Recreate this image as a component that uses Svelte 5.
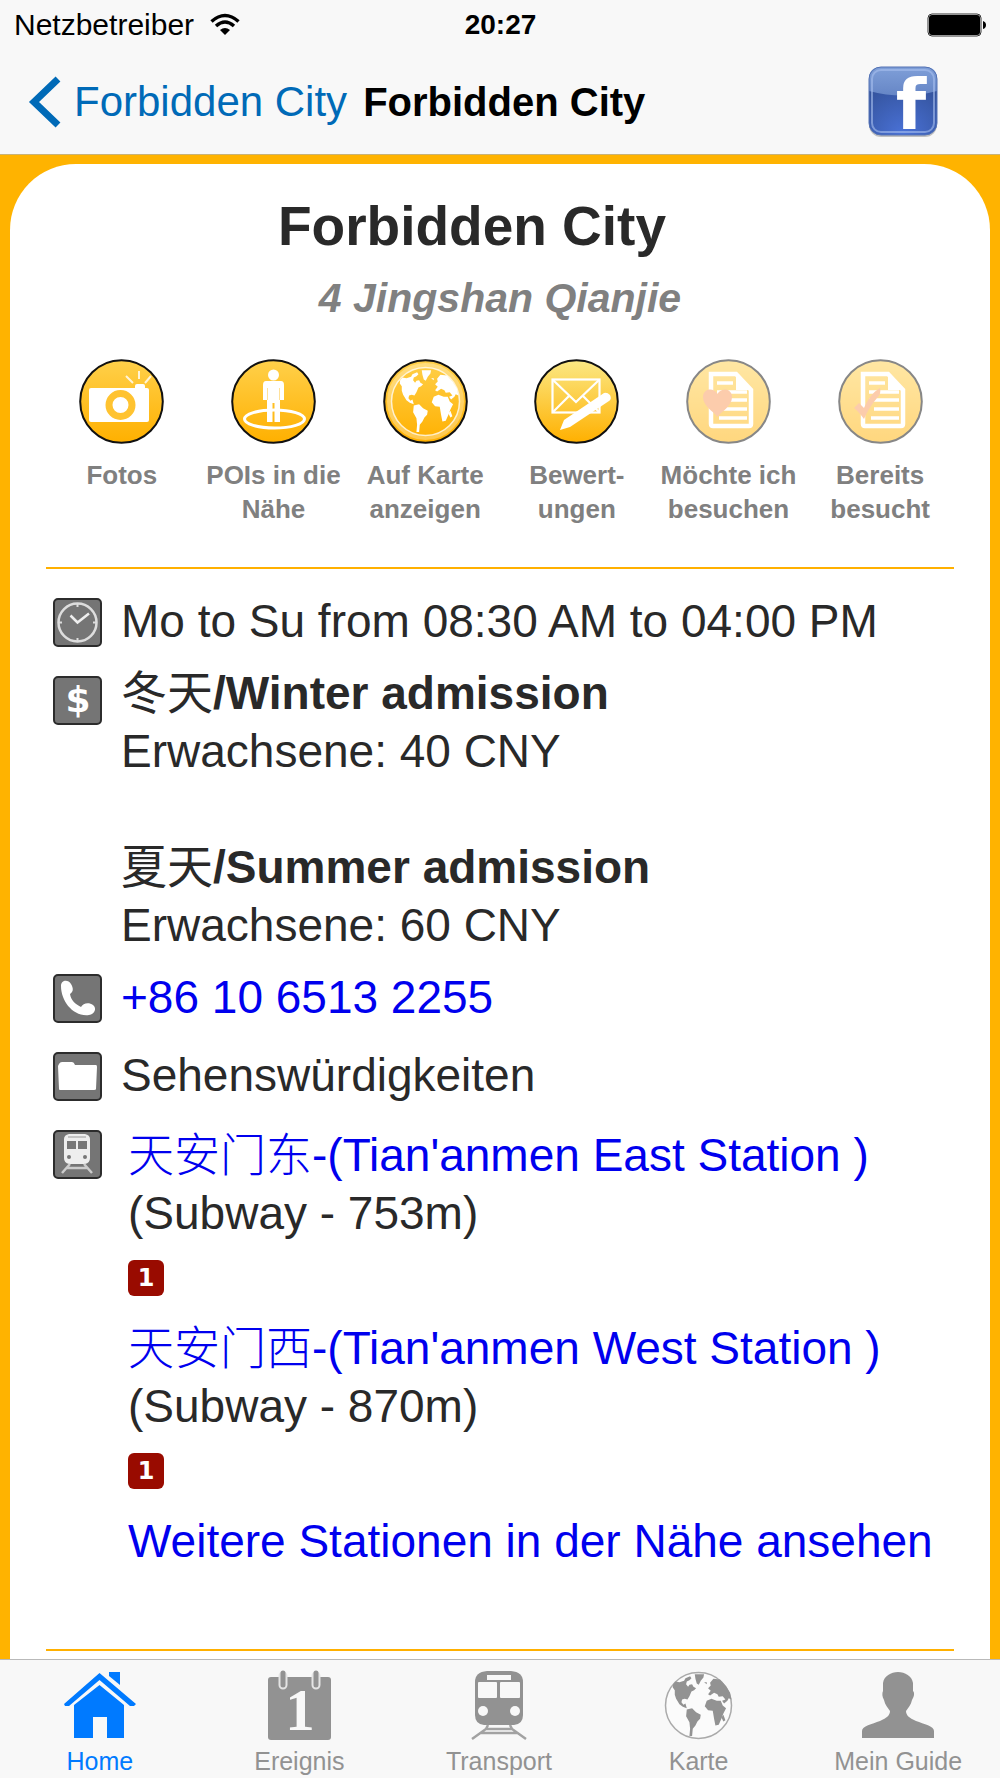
<script>
  let place = {
    name: 'Forbidden City',
    address: '4 Jingshan Qianjie',
    hours: 'Mo to Su from 08:30 AM to 04:00 PM',
    phone: '+86 10 6513 2255',
    category: 'Sehenswürdigkeiten'
  };

  let actions = [
    { icon: 'camera', lines: ['Fotos'] },
    { icon: 'person', lines: ['POIs in die', 'Nähe'] },
    { icon: 'globe', lines: ['Auf Karte', 'anzeigen'] },
    { icon: 'mail', lines: ['Bewert-', 'ungen'], pale: true },
    { icon: 'wish', lines: ['Möchte ich', 'besuchen'], off: true },
    { icon: 'visited', lines: ['Bereits', 'besucht'], off: true }
  ];

  let stations = [
    { cn: '天安门东', en: "Tian'anmen East Station", distance: '753m', line: '1' },
    { cn: '天安门西', en: "Tian'anmen West Station", distance: '870m', line: '1' }
  ];

  let tabs = [
    { id: 'home', label: 'Home' },
    { id: 'event', label: 'Ereignis' },
    { id: 'transport', label: 'Transport' },
    { id: 'map', label: 'Karte' },
    { id: 'guide', label: 'Mein Guide' }
  ];

  let activeTab = $state('home');
</script>

{#snippet continents()}
  <path d="M55 72 L62 64 L74 66 L88 62 L92 54 L106 48 L110 54 L104 60 L96 64 L94 72 L100 80 L104 74 L112 72 L116 80 L124 84 L118 90 L110 94 L104 108 L98 118 L90 116 L82 118 L80 126 L86 134 L92 130 L96 144 L84 140 L74 132 L64 116 L60 104 L60 90 L54 82 Z" />
  <path d="M96 148 L112 144 L124 156 L138 164 L136 176 L128 184 L122 196 L114 206 L112 228 L104 228 L106 206 L104 186 L94 168 Z" />
  <path d="M120 42 L148 42 L146 52 L138 62 L132 74 L126 70 L122 56 Z" />
  <path d="M160 84 L168 76 L166 68 L176 56 L196 58 L214 78 L226 98 L230 118 L222 114 L218 122 L208 130 L202 122 L212 118 L204 108 L192 110 L188 102 L178 98 L166 106 L160 102 L168 92 Z" />
  <path d="M156 122 L170 116 L186 122 L198 122 L204 136 L214 144 L206 160 L200 176 L192 194 L182 196 L178 176 L174 152 L160 150 L150 138 Z" />
  <path d="M200 172 L206 164 L212 180 L206 184 Z M148 66 L156 66 L156 72 Z" />
{/snippet}

{#snippet sheet()}
  <path d="M25 15 H50 L65 31 V65 Q65 67 63 67 H27 Q25 67 25 65 Z" fill="none" stroke="#fff" stroke-width="4.5" />
  <path d="M50 14 L67 31 H50 Z" fill="#fff" />
  <path d="M31 24 H47 M31 33 H61 M31 41 H61 M36 50 H61 M33 59 H61" stroke="#fff" stroke-width="3.5" />
{/snippet}

{#snippet actionIcon(name, pale)}
  <svg class="round" viewBox="0 0 85 85" aria-hidden="true">
    <defs>
      <linearGradient id="fill-{name}" x1="0" y1="0" x2="0" y2="1">
        <stop offset="0" stop-color={pale ? '#fbe884' : '#ffd04a'} />
        <stop offset="1" stop-color="#ffb000" />
      </linearGradient>
    </defs>
    <circle cx="42.5" cy="42.5" r="41.3" fill="url(#fill-{name})" stroke="#111" stroke-width="2" />
    {#if name === 'camera'}
      <rect x="10" y="29" width="60" height="34" rx="2" fill="#fff" />
      <rect x="56" y="25" width="10" height="6" rx="2" fill="#fff" />
      <circle cx="41.5" cy="46" r="11.5" fill="#fff" stroke="#ffc330" stroke-width="7" />
      <path d="M47 17 L54 24 M60 12 V20 M72 17 L66 24" stroke="#fff" stroke-width="2" opacity="0.8" />
    {:else if name === 'person'}
      <ellipse cx="43.5" cy="60" rx="30" ry="9" fill="none" stroke="#fff" stroke-width="3" />
      <circle cx="42.5" cy="16" r="5.5" fill="#fff" />
      <path d="M35 22 H50 Q53 22 53 26 V41 H49 V63 H43.5 V44 H41.5 V63 H36 V41 H32 V26 Q32 22 35 22 Z" fill="#fff" />
      <path d="M36.5 29 V41 M48.5 29 V41" stroke="#ffe19a" stroke-width="1" />
    {:else if name === 'globe'}
      <circle cx="42.5" cy="42.5" r="36" fill="none" stroke="#fff" stroke-width="5" opacity="0.3" />
      <circle cx="42.5" cy="42.5" r="34" fill="none" stroke="#fff" stroke-width="1.5" opacity="0.7" />
      <g transform="translate(-1.2 -2.8) scale(0.333)" fill="#fff">{@render continents()}</g>
    {:else if name === 'mail'}
      <g fill="none" stroke="#fff" stroke-width="2.2">
        <rect x="18.5" y="20.5" width="47" height="33" />
        <path d="M19 21 L42 43 L65 21 M19 53 L35 37 M65 53 L49 37" />
      </g>
      <path d="M26 71 L30 61 L70 34 Q73 33 76 36 Q78 40 75 42 L36 68 Z" fill="#fff" />
    {:else if name === 'wish'}
      {@render sheet()}
      <path d="M31.5 58 C27 52 17 47 17 38 C17 29 28 28 31.5 35 C35 28 46 29 46 38 C46 47 36 52 31.5 58 Z" fill="#fb9a5c" />
    {:else}
      {@render sheet()}
      <path d="M16 49 L21 44 L26 49 C30 40 35 33 42 29 C43 33 42 36 39 39 C33 46 29 53 26 60 C23 56 20 52 16 49 Z" fill="#fb9a5c" />
    {/if}
  </svg>
{/snippet}

{#snippet rowIcon(name)}
  <svg class="square" viewBox="0 0 49 49" aria-hidden="true">
    <rect x="1" y="1" width="47" height="47" rx="4" fill="#757575" stroke="#2c2c2c" stroke-width="2" />
    {#if name === 'clock'}
      <circle cx="24.5" cy="24.5" r="19" fill="none" stroke="#ddd" stroke-width="2.5" />
      <path d="M17.5 17.5 L24.5 24.5 L36 15.5" fill="none" stroke="#eee" stroke-width="2.5" />
      <path d="M24.5 6 V9 M24.5 40 V43 M6 24.5 H9 M40 24.5 H43" stroke="#ddd" stroke-width="2" />
    {:else if name === 'price'}
      <text class="dollar" x="25" y="36" text-anchor="middle">$</text>
    {:else if name === 'phone'}
      <path d="M8 12 C8 6 15 5 18 10 C21 15 20 18 17 20 C18 26 22 30 28 33 C30 29 36 28 40 31 C44 34 42 40 36 41 C20 43 8 27 8 12 Z" fill="#fff" />
    {:else if name === 'folder'}
      <path d="M6 12 Q7 10 9 10 H19 Q21 10 22 13 H43 Q44 13 44 15 L43 37 Q43 38 41 38 H7 Q6 38 6 37 L5 14 Z" fill="#fff" />
    {:else}
      <path d="M16 4 H32 Q37 5 37 9 V28 Q37 33 32 34 H16 Q11 33 11 28 V9 Q11 5 16 4 Z" fill="#eee" />
      <path d="M14 11 H23 V19 H14 Z M25 11 H34 V19 H25 Z" fill="#777" />
      <path d="M15 7 H33" stroke="#999" stroke-width="1" />
      <circle cx="16" cy="27" r="2" fill="#777" />
      <circle cx="32" cy="27" r="2" fill="#777" />
      <path d="M17 34 L9 43 M31 34 L39 43 M13 38 H35" stroke="#ccc" stroke-width="2.5" />
    {/if}
  </svg>
{/snippet}

{#snippet tabIcon(name)}
  {#if name === 'home'}
    <svg class="tab-icon" viewBox="0 0 72 69" aria-hidden="true" fill="currentColor">
      <path d="M0 33 L35.5 2 L72 33 L70 35 L66 35 L35.5 9 L5 35 L1 35 Z" />
      <path d="M45 1 H56 V14 L45 5 Z" />
      <path d="M35.5 14 L60 34 V67 H43 V46 H29 V67 H10 V34 Z" />
    </svg>
  {:else if name === 'event'}
    <svg class="tab-icon" viewBox="0 0 72 69" aria-hidden="true">
      <rect x="5" y="6" width="63" height="63" rx="3" fill="#929292" />
      <path d="M20 5 V14 M53 5 V14" stroke="#e4e4e4" stroke-width="9" stroke-linecap="round" />
      <path d="M20 2 V14 M53 2 V14" stroke="#929292" stroke-width="5" stroke-linecap="round" />
      <text class="day" x="37" y="59" text-anchor="middle">1</text>
    </svg>
  {:else if name === 'transport'}
    <svg class="tab-icon" viewBox="0 0 72 69" aria-hidden="true">
      <path d="M24 0 H48 Q60 1 60 11 V44 Q60 53 51 54 H21 Q12 53 12 44 V11 Q12 1 24 0 Z" fill="#929292" />
      <g fill="#f8f8f8">
        <rect x="24" y="4" width="24" height="5" />
        <rect x="15" y="11" width="19" height="16" rx="1" />
        <rect x="37" y="11" width="20" height="16" rx="1" />
        <circle cx="20" cy="40" r="5" />
        <circle cx="52" cy="40" r="5" />
      </g>
      <path d="M25 54 L23 58 L9 68 M47 54 L49 58 L63 68 M23 58 H49 M18 62 H54" fill="none" stroke="#a2a2a2" stroke-width="2.5" />
    </svg>
  {:else if name === 'map'}
    <svg class="tab-icon" viewBox="0 0 72 69" aria-hidden="true">
      <circle cx="35.5" cy="34.5" r="33" fill="#fbfbfb" stroke="#aaa" stroke-width="1.5" />
      <g transform="translate(-8.2 -10.8) scale(0.333)" fill="#929292">{@render continents()}</g>
    </svg>
  {:else}
    <svg class="tab-icon" viewBox="0 0 72 69" aria-hidden="true">
      <path d="M36 1 C43 1 50 5 51 12 L51 20 C53 22 52 26 50 29 C49 34 46 37 44 40 C44 44 47 47 54 50 C62 53 72 55 72 60 V67 H0 V60 C0 55 10 53 18 50 C25 47 28 44 28 40 C26 37 23 34 22 29 C20 26 20 22 21 20 L21 12 C22 5 29 1 36 1 Z" fill="#929292" />
    </svg>
  {/if}
{/snippet}

<div class="screen">
  <header>
    <div class="status">
      <div class="carrier">
        <span>Netzbetreiber</span>
        <svg width="30" height="22" viewBox="0 0 30 22" aria-hidden="true">
          <path d="M1.5 7.5 Q15 -4.5 28.5 7.5" fill="none" stroke="#000" stroke-width="3.5" />
          <path d="M6 12 Q15 4 24 12" fill="none" stroke="#000" stroke-width="3.5" />
          <path d="M10 16 Q15 12 20 16 L15 21 Z" />
        </svg>
      </div>
      <span class="time">20:27</span>
      <svg class="battery" width="60" height="24" viewBox="0 0 60 24" aria-hidden="true">
        <rect x="1" y="1" width="53" height="22" rx="4" fill="#f8f8f8" stroke="#333" />
        <rect x="2" y="2" width="51" height="20" rx="3" />
        <path d="M56 8 Q59 9 59 12 Q59 15 56 16 Z" />
      </svg>
    </div>
    <div class="bar">
      <a class="back" href="#back">
        <svg width="32" height="52" viewBox="0 0 32 52" aria-hidden="true">
          <path d="M28 3 L4 26 L28 49" fill="none" stroke="currentColor" stroke-width="7" />
        </svg>
        Forbidden City
      </a>
      <span class="title">{place.name}</span>
      <button class="share" aria-label="Facebook">
        <svg width="70" height="72" viewBox="0 0 70 72" aria-hidden="true">
          <defs>
            <linearGradient id="gloss" x1="0" y1="0" x2="0" y2="1">
              <stop offset="0" stop-color="#7f9fd8" />
              <stop offset="1" stop-color="#6686c6" />
            </linearGradient>
            <radialGradient id="glow" cx="0.5" cy="1" r="0.8">
              <stop offset="0" stop-color="#4a72d8" />
              <stop offset="1" stop-color="#34539c" />
            </radialGradient>
          </defs>
          <rect x="1" y="2" width="68" height="69" rx="12" fill="#9a9a9a" opacity="0.6" />
          <rect x="1" y="1" width="68" height="68" rx="12" fill="url(#glow)" />
          <path d="M1 25 V13 Q1 1 13 1 H57 Q69 1 69 13 V25 Q35 34 1 25 Z" fill="url(#gloss)" />
          <rect x="1" y="1" width="68" height="68" rx="12" fill="none" stroke="#5573b4" />
          <rect x="4" y="4" width="62" height="62" rx="9" fill="none" stroke="#a9c0ee" stroke-width="2" opacity="0.6" />
          <text class="fb" x="43" y="63" text-anchor="middle">f</text>
        </svg>
      </button>
    </div>
  </header>

  <main>
    <article>
      <h1>{place.name}</h1>
      <p class="address">{place.address}</p>

      <div class="actions">
        {#each actions as action}
          <button class="action">
            <span class="action-icon" class:off={action.off}>{@render actionIcon(action.icon, action.pale)}</span>
            {#each action.lines as line}
              <span>{line}</span>
            {/each}
          </button>
        {/each}
      </div>

      <hr />

      <div class="info">
        <div class="row">
          {@render rowIcon('clock')}
          <div>{place.hours}</div>
        </div>
        <div class="row">
          {@render rowIcon('price')}
          <div class="prices">
            <div class="price">
              <b><span class="cn">冬天</span>/Winter admission</b>
              <span>Erwachsene: 40 CNY</span>
            </div>
            <div class="price">
              <b><span class="cn">夏天</span>/Summer admission</b>
              <span>Erwachsene: 60 CNY</span>
            </div>
          </div>
        </div>
        <div class="row">
          {@render rowIcon('phone')}
          <a href="tel:+861065132255">{place.phone}</a>
        </div>
        <div class="row">
          {@render rowIcon('folder')}
          <div>{place.category}</div>
        </div>
        <div class="row">
          {@render rowIcon('train')}
          <div class="stations">
            {#each stations as station}
              <div class="station">
                <a href="#station">{station.cn}-({station.en} )</a>
                <span>(Subway - {station.distance})</span>
                <span class="line">{station.line}</span>
              </div>
            {/each}
            <a href="#stations">Weitere Stationen in der Nähe ansehen</a>
          </div>
        </div>
      </div>

      <hr />
    </article>
  </main>

  <nav class="tabs">
    {#each tabs as tab}
      <a href="#{tab.id}" class:active={activeTab === tab.id} onclick={() => (activeTab = tab.id)}>
        {@render tabIcon(tab.id)}
        {tab.label}
      </a>
    {/each}
  </nav>
</div>

<style>
  :global(body) {
    margin: 0;
    background: #f8f8f8;
  }

  .screen {
    display: flex;
    flex-direction: column;
    min-height: 100vh;
    font-family: 'Liberation Sans', 'Noto Sans CJK SC', sans-serif;
    color: #292929;
  }

  a {
    color: #0000ee;
    text-decoration: none;
  }

  button {
    padding: 0;
    border: 0;
    background: none;
    font: inherit;
    cursor: pointer;
  }

  svg {
    display: block;
    flex: none;
    overflow: visible;
  }

  header {
    background: #f8f8f8;
    border-bottom: 1px solid #c9b377;
    color: #000;
  }

  .status {
    display: grid;
    grid-template-columns: 1fr auto 1fr;
    align-items: center;
    height: 50px;
    padding: 0 13px 0 14px;
    font-size: 30px;
  }

  .carrier {
    display: flex;
    align-items: center;
    gap: 16px;
  }

  .time {
    font-size: 28px;
    font-weight: bold;
  }

  .battery {
    justify-self: end;
  }

  .bar {
    display: flex;
    align-items: center;
    height: 104px;
    padding: 0 62px 0 30px;
    font-size: 42px;
    white-space: nowrap;
  }

  .back {
    display: flex;
    align-items: center;
    gap: 12px;
    color: #006ab7;
  }

  .title {
    margin-left: 16px;
    font-size: 40px;
    font-weight: bold;
  }

  .share {
    margin-left: auto;
  }

  .fb {
    font: bold 70px 'DejaVu Sans', sans-serif;
    fill: #fff;
  }

  main {
    display: flex;
    flex: 1;
    padding: 9px 10px 0;
    background: #ffb300;
  }

  article {
    flex: 1;
    padding: 30px 36px 8px;
    border-radius: 66px 66px 0 0;
    background: #fff;
  }

  h1 {
    margin: 0;
    padding-right: 56px;
    font-size: 55px;
    line-height: 64px;
    text-align: center;
  }

  .address {
    margin: 16px 0 37px;
    color: #808080;
    font-size: 41px;
    font-style: italic;
    font-weight: bold;
    line-height: 48px;
    text-align: center;
  }

  .actions {
    display: grid;
    grid-template-columns: repeat(6, 1fr);
    margin: 0 -2px 41px 0;
  }

  .action {
    display: flex;
    flex-direction: column;
    align-items: center;
    color: #808080;
    font-size: 26px;
    font-weight: bold;
    line-height: 34px;
    white-space: nowrap;
  }

  .action-icon {
    margin-bottom: 14px;
  }

  .off {
    opacity: 0.5;
  }

  .round {
    width: 85px;
    height: 85px;
  }

  hr {
    height: 2px;
    margin: 0;
    border: 0;
    background: #ffb000;
  }

  .info {
    display: flex;
    flex-direction: column;
    gap: 20px;
    padding: 23px 0 79px 7px;
    font-size: 46px;
    line-height: 58px;
  }

  .row {
    display: flex;
    align-items: flex-start;
    gap: 19px;
  }

  .square {
    width: 49px;
    height: 49px;
    margin-top: 6px;
  }

  .dollar {
    font: bold 36px 'DejaVu Sans', sans-serif;
    fill: #fff;
  }

  .prices {
    display: grid;
    gap: 58px;
    margin: -6px 0;
  }

  .price,
  .station {
    display: flex;
    flex-direction: column;
    align-items: flex-start;
  }

  .cn {
    font-weight: 400;
  }

  .stations {
    padding: 2px 0 0 7px;
  }

  .station {
    margin-bottom: 23px;
  }

  .station a {
    font-weight: 300;
  }

  .line {
    width: 36px;
    margin-top: 18px;
    border-radius: 6px;
    background: #990b00;
    color: #fff;
    font: bold 24px/36px 'DejaVu Sans', sans-serif;
    text-align: center;
  }

  .tabs {
    display: grid;
    grid-template-columns: repeat(5, 1fr);
    padding: 11px 2px 2px 0;
    border-top: 1px solid #b9b9b9;
    background: #f8f8f8;
  }

  .tabs a {
    display: flex;
    flex-direction: column;
    align-items: center;
    gap: 6px;
    color: #929292;
    font-size: 25px;
    line-height: 30px;
  }

  .tabs .active {
    color: #007aff;
  }

  .tab-icon {
    width: 72px;
    height: 69px;
  }

  .day {
    font: bold 59px 'Liberation Serif', serif;
    fill: #f8f8f8;
  }
</style>
